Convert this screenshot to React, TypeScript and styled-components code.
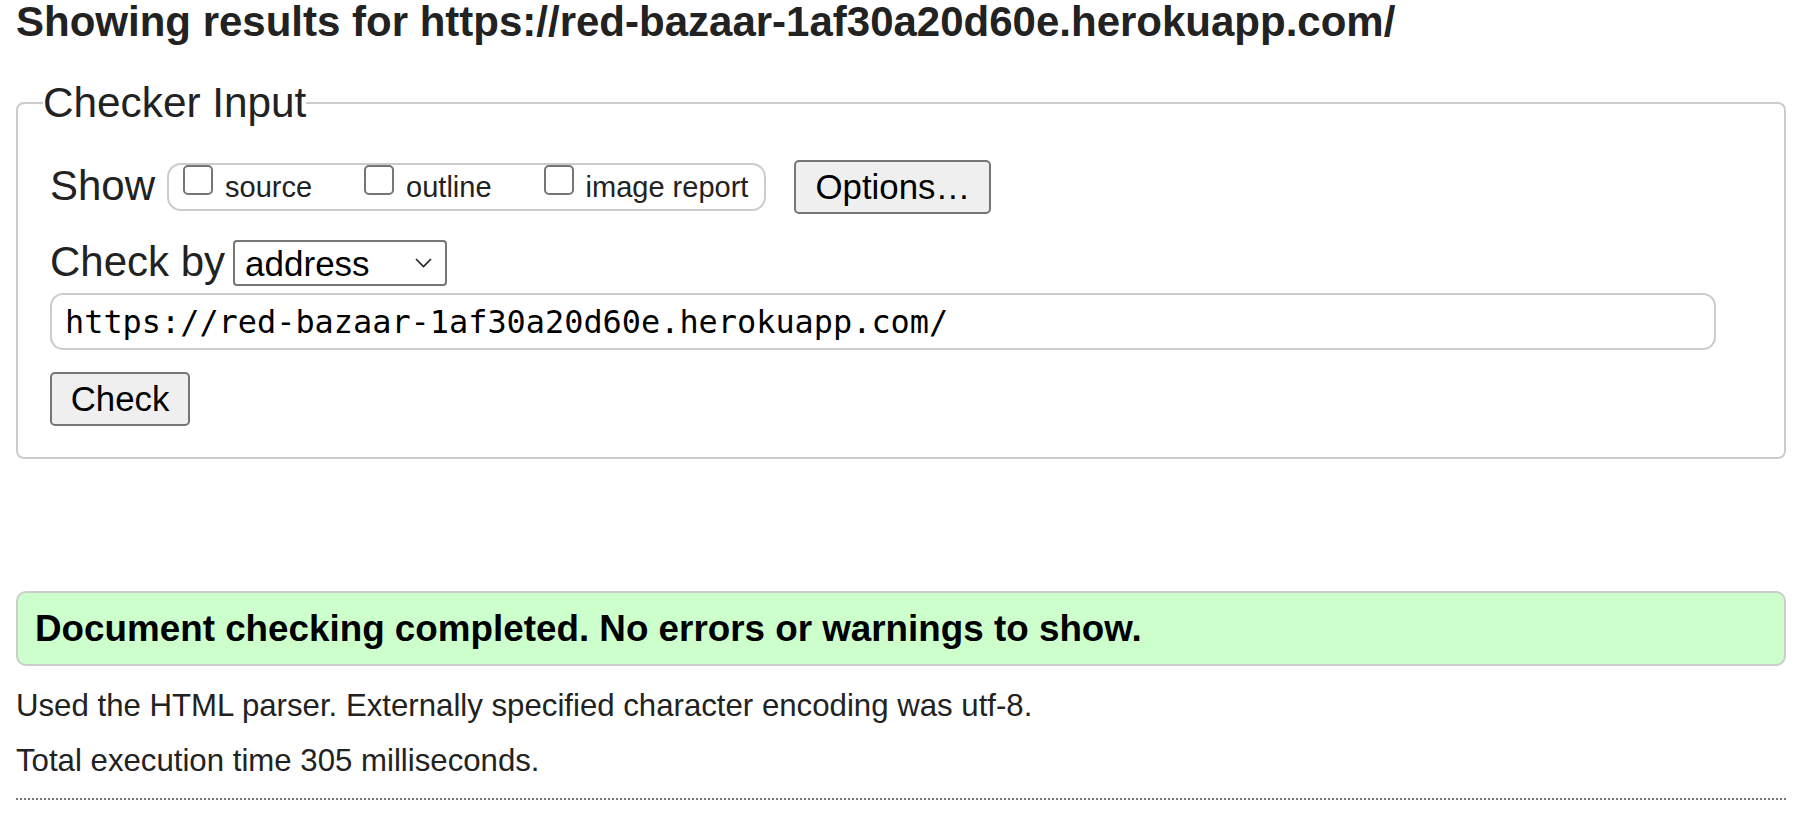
import React from "react";
import styled, { createGlobalStyle } from "styled-components";

const GlobalStyle = createGlobalStyle`
  html, body {
    margin: 0;
    padding: 0;
    background: #ffffff;
  }
  body {
    font-family: "Liberation Sans", Arial, sans-serif;
    color: #222222;
  }
`;

const Page = styled.div`
  padding: 0 27px 0 16px;
`;

const Title = styled.h2`
  margin: 0;
  font-size: 42px;
  font-weight: 700;
  line-height: 44px;
  color: #222222;
`;

const Fieldset = styled.fieldset`
  margin: 35px 0 0 0;
  padding: 0;
  border: 2px solid #cccccc;
  border-radius: 8px;
  min-width: 0;
`;

const Legend = styled.legend`
  margin-left: 25px;
  padding: 0;
  font-size: 42.3px;
  line-height: 48px;
  color: #222222;
`;

const Body = styled.div`
  padding: 33px 68px 31px 32px;
`;

const Row = styled.div<{ $h: number; $mt?: number }>`
  display: flex;
  align-items: center;
  height: ${(p) => p.$h}px;
  margin-top: ${(p) => p.$mt ?? 0}px;
`;

const RowLabel = styled.span`
  font-size: 42px;
  line-height: 47px;
  margin-bottom: 4px;
  color: #222222;
  white-space: nowrap;
`;

const CheckGroup = styled.span`
  display: inline-flex;
  align-items: flex-start;
  margin-left: 12px;
  padding: 0 16px 6px 14px;
  border: 2px solid #cccccc;
  border-radius: 14px;
`;

const CheckItem = styled.label<{ $last?: boolean }>`
  display: inline-flex;
  align-items: flex-start;
  margin-right: ${(p) => (p.$last ? 0 : 52)}px;
`;

const Box = styled.input`
  appearance: none;
  -webkit-appearance: none;
  width: 30px;
  height: 30px;
  margin: 0;
  box-sizing: border-box;
  border: 2px solid #767676;
  border-radius: 5px;
  background: #ffffff;
`;

const CheckText = styled.span`
  margin: 6px 0 0 12px;
  font-size: 29px;
  line-height: 32px;
  color: #222222;
  white-space: nowrap;
`;

const Button = styled.button<{ $w: number; $ml?: number }>`
  box-sizing: border-box;
  width: ${(p) => p.$w}px;
  height: 54px;
  margin: 0 0 0 ${(p) => p.$ml ?? 0}px;
  padding: 0;
  border: 2px solid #767676;
  border-radius: 5px;
  background: #efefef;
  color: #000000;
  font-family: "Liberation Sans", Arial, sans-serif;
  font-size: 34.8px;
  line-height: 1;
`;

const SelectWrap = styled.span`
  position: relative;
  display: inline-block;
  margin-left: 8px;
`;

const Select = styled.select`
  appearance: none;
  -webkit-appearance: none;
  box-sizing: border-box;
  width: 214px;
  height: 46px;
  margin: 0;
  padding: 0 0 0 10px;
  border: 2px solid #767676;
  border-radius: 4px;
  background: #ffffff;
  color: #000000;
  font-family: "Liberation Sans", Arial, sans-serif;
  font-size: 35px;
`;

const Chevron = styled.svg`
  position: absolute;
  right: 15px;
  top: 18px;
  pointer-events: none;
`;

const UrlInput = styled.input`
  display: block;
  box-sizing: border-box;
  width: 100%;
  height: 57px;
  margin: 7px 0 0 0;
  padding: 0 0 0 13px;
  border: 2px solid #cccccc;
  border-radius: 13px;
  background: #ffffff;
  color: #000000;
  font-family: "DejaVu Sans Mono", "Liberation Mono", monospace;
  font-size: 31.9px;
`;

const ButtonRow = styled.div`
  margin-top: 22px;
`;

const Success = styled.div`
  box-sizing: border-box;
  display: flex;
  align-items: center;
  height: 75px;
  margin-top: 132px;
  padding-left: 17px;
  border: 2px solid #cccccc;
  border-radius: 10px;
  background: #ccffcc;
  color: #000000;
  font-size: 36.8px;
  font-weight: 700;
  white-space: nowrap;
`;

const Note = styled.p<{ $mt: number }>`
  margin: ${(p) => p.$mt}px 0 0 0;
  font-size: 31.2px;
  line-height: 36px;
  color: #222222;
`;

const Dotted = styled.hr`
  margin: 19px 0 0 0;
  border: 0;
  border-top: 2px dotted #777777;
  height: 0;
`;

export default function App() {
  const url = "https://red-bazaar-1af30a20d60e.herokuapp.com/";
  return (
    <Page>
      <GlobalStyle />
      <Title>Showing results for {url}</Title>
      <Fieldset>
        <Legend>Checker Input</Legend>
        <Body>
          <Row $h={54}>
            <RowLabel>Show</RowLabel>
            <CheckGroup>
              <CheckItem>
                <Box type="checkbox" />
                <CheckText>source</CheckText>
              </CheckItem>
              <CheckItem>
                <Box type="checkbox" />
                <CheckText>outline</CheckText>
              </CheckItem>
              <CheckItem $last>
                <Box type="checkbox" />
                <CheckText>image report</CheckText>
              </CheckItem>
            </CheckGroup>
            <Button type="button" $w={197} $ml={28}>
              Options…
            </Button>
          </Row>
          <Row $h={46} $mt={26}>
            <RowLabel>Check by</RowLabel>
            <SelectWrap>
              <Select defaultValue="address">
                <option value="address">address</option>
                <option value="upload">file upload</option>
                <option value="input">text input</option>
              </Select>
              <Chevron width="17" height="10" viewBox="0 0 17 10">
                <path d="M1 1 L8.5 8.5 L16 1" fill="none" stroke="#222" strokeWidth="1.6" />
              </Chevron>
            </SelectWrap>
          </Row>
          <UrlInput type="url" defaultValue={url} />
          <ButtonRow>
            <Button type="submit" $w={140}>
              Check
            </Button>
          </ButtonRow>
        </Body>
      </Fieldset>
      <Success>Document checking completed. No errors or warnings to show.</Success>
      <Note $mt={22}>Used the HTML parser. Externally specified character encoding was utf-8.</Note>
      <Note $mt={19}>Total execution time 305 milliseconds.</Note>
      <Dotted />
    </Page>
  );
}
